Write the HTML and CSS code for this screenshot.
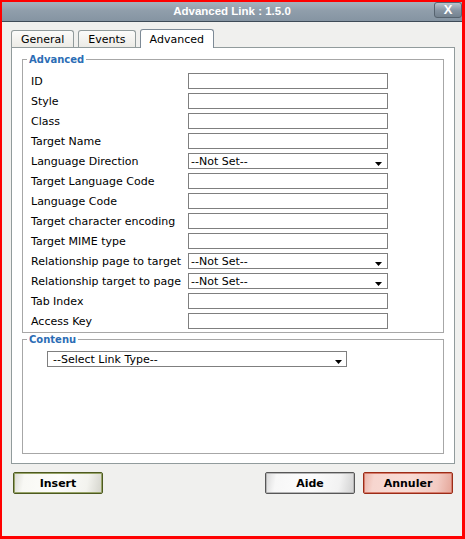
FILE: index.html
```html
<!DOCTYPE html>
<html>
<head>
<meta charset="utf-8">
<title>Advanced Link</title>
<link rel="stylesheet" href="styles.css">
</head>
<body>
<div class="window">
  <div class="titlebar">
    <span class="title">Advanced Link : 1.5.0</span>
    <span class="close">X</span>
  </div>
  <div class="content">
    <div class="tabs">
      <div class="tab">General</div>
      <div class="tab">Events</div>
      <div class="tab active">Advanced</div>
    </div>
    <div class="panel">
      <fieldset class="fs fs-adv">
        <legend>Advanced</legend>
        <div class="form-grid">
          <span class="lbl">ID</span><div class="field"></div>
          <span class="lbl">Style</span><div class="field"></div>
          <span class="lbl">Class</span><div class="field"></div>
          <span class="lbl">Target Name</span><div class="field"></div>
          <span class="lbl">Language Direction</span><div class="field select"><span>--Not Set--</span><svg class="arrow" width="7" height="4" viewBox="0 0 7 4"><polygon points="0,0 7,0 3.5,4" fill="#000"/></svg></div>
          <span class="lbl">Target Language Code</span><div class="field"></div>
          <span class="lbl">Language Code</span><div class="field"></div>
          <span class="lbl">Target character encoding</span><div class="field"></div>
          <span class="lbl">Target MIME type</span><div class="field"></div>
          <span class="lbl">Relationship page to target</span><div class="field select"><span>--Not Set--</span><svg class="arrow" width="7" height="4" viewBox="0 0 7 4"><polygon points="0,0 7,0 3.5,4" fill="#000"/></svg></div>
          <span class="lbl">Relationship target to page</span><div class="field select"><span>--Not Set--</span><svg class="arrow" width="7" height="4" viewBox="0 0 7 4"><polygon points="0,0 7,0 3.5,4" fill="#000"/></svg></div>
          <span class="lbl">Tab Index</span><div class="field"></div>
          <span class="lbl">Access Key</span><div class="field"></div>
        </div>
      </fieldset>
      <fieldset class="fs fs-contenu">
        <legend>Contenu</legend>
        <div class="contenu-body">
          <div class="field select linktype"><span>--Select Link Type--</span><svg class="arrow" width="7" height="4" viewBox="0 0 7 4"><polygon points="0,0 7,0 3.5,4" fill="#000"/></svg></div>
        </div>
      </fieldset>
    </div>
    <div class="buttons">
      <div class="btn btn-insert">Insert</div>
      <div class="spacer"></div>
      <div class="btn btn-aide">Aide</div>
      <div class="btn btn-annuler">Annuler</div>
    </div>
  </div>
</div>
</body>
</html>
```

FILE: styles.css
```css
html, body {
  margin: 0;
  padding: 0;
}
body {
  font-family: "DejaVu Sans", Verdana, sans-serif;
  font-size: 11px;
  color: #000;
  background: #f0f0ee;
}
.window {
  width: 465px;
  height: 539px;
  box-sizing: border-box;
  border-style: solid;
  border-color: #ff0000;
  border-width: 2px 3px 3px 2px;
  background: #f0f0ee;
}
.titlebar {
  height: 19px;
  border-bottom: 1px solid #3e4b57;
  background: linear-gradient(#a6b1bd, #909eab 45%, #8594a2);
  display: grid;
  grid-template-columns: 1fr auto 1fr;
  align-items: center;
}
.title {
  grid-column: 2;
  font-family: "Liberation Sans", Arial, sans-serif;
  font-weight: bold;
  font-size: 11.5px;
  color: #fff;
  line-height: 19px;
}
.close {
  grid-column: 3;
  justify-self: end;
  align-self: start;
  width: 28px;
  height: 16px;
  box-sizing: border-box;
  border: 1px solid #56636f;
  border-radius: 3px;
  background: linear-gradient(#b9c3cc, #8593a1 55%, #74828f);
  color: #fff;
  font-family: "Liberation Sans", Arial, sans-serif;
  font-weight: bold;
  font-size: 13px;
  line-height: 14px;
  text-align: center;
}
.content {
  padding: 7px 7px 0 9px;
}
.tabs {
  display: flex;
  align-items: flex-start;
  gap: 4px;
  height: 19px;
  margin-bottom: -1px;
  position: relative;
  z-index: 1;
}
.tab {
  height: 17px;
  box-sizing: border-box;
  margin-top: 1px;
  border: 1px solid #919b9c;
  border-bottom: none;
  border-radius: 3px 3px 0 0;
  background: linear-gradient(#fbfbfa, #ecebe6);
  padding: 0 9px;
  font-size: 11px;
  line-height: 17px;
}
.tab.active {
  height: 19px;
  margin-top: 0;
  background: #fff;
  border-color: #7d8a96;
  line-height: 19px;
}
.panel {
  border: 1px solid #919b9c;
  background: #fff;
  padding: 5px 10px 9px 10px;
}
.fs {
  margin: 0;
  padding: 0;
  border: 1px solid #a7a7a7;
  min-width: 0;
}
.fs legend {
  font-weight: bold;
  font-size: 10px;
  line-height: 13px;
  color: #2c6db5;
  padding: 0 2px;
  margin-left: 4px;
}
.form-grid {
  display: grid;
  grid-template-columns: 157px 200px;
  grid-auto-rows: 16px;
  row-gap: 4px;
  align-items: center;
  padding: 7px 0 3px 8px;
}
.lbl {
  white-space: nowrap;
  line-height: 14px;
  padding-top: 2px;
}
.field {
  height: 16px;
  box-sizing: border-box;
  border: 1px solid #7f7f7f;
  background: #fff;
}
.select {
  display: flex;
  justify-content: space-between;
  align-items: flex-end;
  padding-left: 2px;
  line-height: 13px;
}
.select span {
  align-self: center;
  white-space: nowrap;
  padding-top: 1px;
}
.arrow {
  display: block;
  margin: 0 5px 2px 0;
}
.contenu-body {
  padding: 5px 0 86px 24px;
}
.linktype {
  width: 300px;
  padding-left: 5px;
}
.linktype .arrow {
  margin-right: 4px;
}
.buttons {
  display: flex;
  gap: 8px;
  padding: 8px 2px 0 2px;
}
.spacer {
  flex: 1;
}
.btn {
  width: 90px;
  height: 22px;
  box-sizing: border-box;
  border: 1px solid #555;
  border-radius: 2px;
  font-weight: bold;
  font-size: 11px;
  line-height: 22px;
  text-align: center;
}
.btn-insert {
  border-color: #4d5a1f;
  box-shadow: inset 0 0 0 1px #98a46a;
  background: linear-gradient(100deg, #d9d9d2 0, #f8f8f4 12%, #fdfdfb 50%, #f3f3ee 82%, #d3d3cb 100%);
}
.btn-aide {
  border-color: #575757;
  box-shadow: inset 0 0 0 1px #b6b6b6;
  background: linear-gradient(100deg, #d8d8d8 0, #f7f7f7 12%, #fdfdfd 50%, #f2f2f2 82%, #d0d0d0 100%);
}
.btn-annuler {
  border-color: #9b2c17;
  box-shadow: inset 0 0 0 1px #d77c6c;
  background: linear-gradient(100deg, #eab3a8 0, #f7d6cf 12%, #f9dcd5 50%, #f3cbc3 82%, #e4a598 100%);
}
```
